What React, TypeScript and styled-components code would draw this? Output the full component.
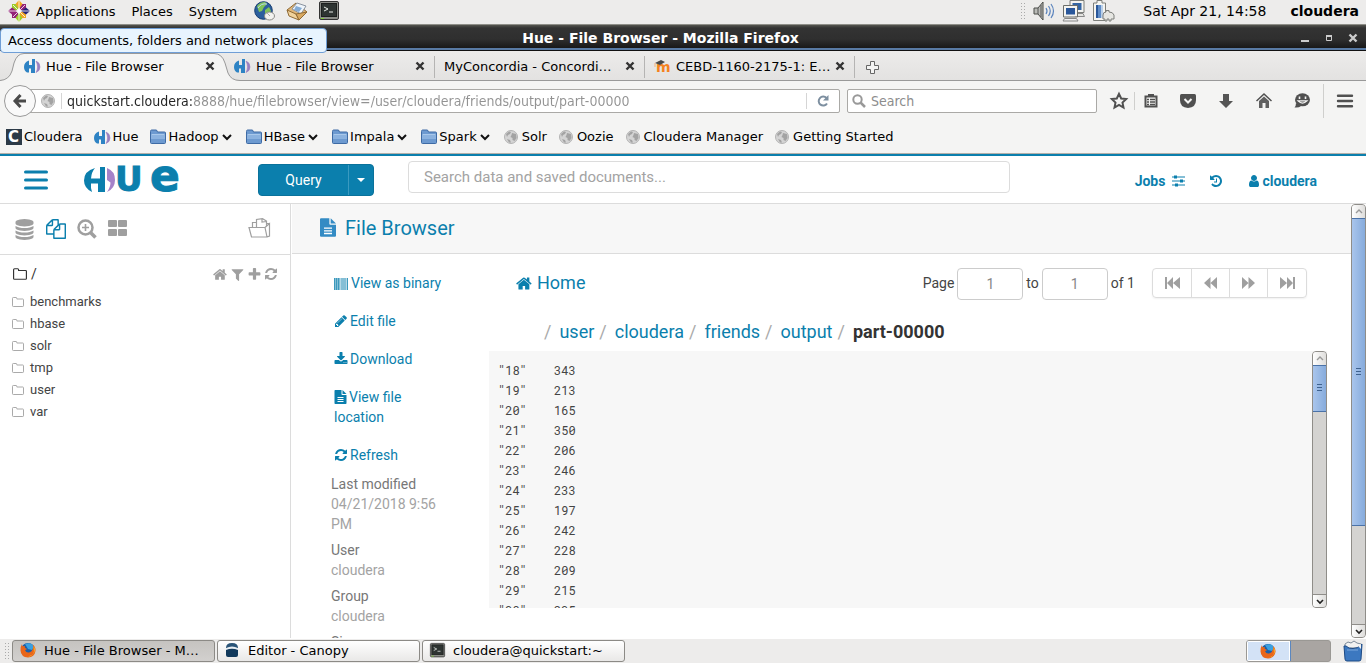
import React from 'react';
import styled, { createGlobalStyle } from 'styled-components';

const UI = '"DejaVu Sans", sans-serif';
const UI_NARROW = '"DejaVu Sans Condensed", "DejaVu Sans", sans-serif';
const WEB = 'Roboto, "Liberation Sans", sans-serif';
const MONO = '"Roboto Mono", "DejaVu Sans Mono", monospace';
const BLUE = '#0b7fad';
const GREY = '#9f9f9f';
const LINE = '#dcdcdc';

const GlobalStyle = createGlobalStyle`
  * { box-sizing: border-box; }
  body { margin: 0; background: #fff; }
  button, input { font: inherit; color: inherit; margin: 0; }
  button { padding: 0; border: 0; background: none; cursor: pointer; }
  ul, ol, dl, dd, h1, pre { margin: 0; padding: 0; list-style: none; font-weight: 400; }
  a { color: inherit; text-decoration: none; }
  svg { display: block; flex: none; overflow: visible; }
`;

/* ---------- desktop frame ---------- */

const Desktop = styled.div`
  display: flex;
  flex-direction: column;
  height: 100vh;
  overflow: hidden;
  position: relative;
  font-family: ${UI};
  font-size: 13px;
  color: #000;
`;

const Panel = styled.header`
  display: flex;
  align-items: center;
  flex: none;
  height: 25px;
  padding: 0 7px 2px 8px;
  background: #edeceb;
  border-bottom: 1px solid #8e8e88;
`;

const PanelMenu = styled.nav`
  display: flex;
  align-items: center;
  gap: 16px;
  margin-left: 6px;
`;

const Launchers = styled.div`
  display: flex;
  gap: 11px;
  margin-left: 17px;
  flex: 1;
`;

const Tray = styled.div`
  display: flex;
  align-items: center;
  gap: 8px;
`;

const Clock = styled.button`
  font-size: 14px;
  margin-left: 28px;
`;

const UserMenu = styled.button`
  font-size: 14px;
  font-weight: 700;
  margin-left: 24px;
`;

const Grip = styled.span`
  width: 5px;
  height: 18px;
  background-image: radial-gradient(#aaa 35%, transparent 40%);
  background-size: 3px 3px;
`;

const Tooltip = styled.div`
  position: absolute;
  z-index: 5;
  left: 0;
  top: 28px;
  height: 25px;
  padding: 0 13px 0 7px;
  line-height: 23px;
  background: #e8f4fe;
  border: 1px solid #6f9ed6;
  border-radius: 4px;
  white-space: nowrap;
`;

const TitleBar = styled.div`
  display: flex;
  align-items: center;
  flex: none;
  height: 26px;
  padding: 0 6px 0 28px;
  color: #fff;
  background: linear-gradient(#55554f 0, #333 3px, #2f2f2f 14px, #191919 23px, #587aa4 23px, #587aa4 25px, #111 25px);
`;

const WindowTitle = styled.span`
  flex: 1;
  text-align: center;
  font-size: 14px;
  font-weight: 700;
`;

const WindowButton = styled.button`
  width: 24px;
  height: 20px;
  display: grid;
  place-items: center;
  &:last-child { width: 14px; margin-left: 5px; }
`;

/* ---------- browser chrome ---------- */

const TabStrip = styled.div`
  display: flex;
  flex: none;
  height: 30px;
  padding-left: 14px;
  background: linear-gradient(#ecebea, #e3e2e1);
  border-bottom: 1px solid #999;
`;

const TabBox = styled.div<{ $active?: boolean; $divided?: boolean }>`
  position: relative;
  display: flex;
  align-items: center;
  width: 210px;
  padding: 0 6px 0 10px;
  height: 30px;
  z-index: ${p => (p.$active ? 1 : 0)};
  &::before {
    content: '';
    position: absolute;
    left: 0;
    top: 5px;
    height: 22px;
    border-left: ${p => (p.$divided ? '1px solid #b5b4b3' : '0')};
  }
`;

const TabShape = styled.svg`
  position: absolute;
  left: -14px;
  top: 0;
  z-index: -1;
`;

const TabButton = styled.button`
  display: flex;
  align-items: center;
  gap: 6px;
  flex: 1;
  min-width: 0;
  white-space: nowrap;
`;

const CloseButton = styled.button`
  width: 16px;
  height: 16px;
  display: grid;
  place-items: center;
`;

const NewTab = styled.button`
  display: grid;
  place-items: center;
  width: 36px;
  border-left: 1px solid #b5b4b3;
  margin: 5px 0 2px;
`;

const NavBar = styled.div`
  display: flex;
  align-items: center;
  flex: none;
  height: 39px;
  padding: 0 2px 0 4px;
  background: #f4f4f3;
  font-family: ${UI_NARROW};
  font-size: 14px;
`;

const BackButton = styled.button`
  display: grid;
  place-items: center;
  width: 32px;
  height: 32px;
  border: 1px solid #999;
  border-radius: 50%;
  background: #f9f9f9;
  position: relative;
  z-index: 1;
`;

const Field = styled.div<{ $width?: number; $tuck?: boolean }>`
  display: flex;
  align-items: center;
  height: 24px;
  background: #fff;
  border: 1px solid #aaa9a6;
  border-radius: 2px;
  flex: ${p => (p.$width ? `0 0 ${p.$width}px` : '1')};
  margin-left: ${p => (p.$tuck ? '-8px' : '7px')};
  padding-left: ${p => (p.$tuck ? '12px' : '4px')};
`;

const FieldInput = styled.input`
  flex: 1;
  min-width: 0;
  border: 0;
  outline: 0;
  padding: 0 5px;
  background: none;
  &::placeholder { color: #8d8d8d; opacity: 1; }
`;

const AddressInput = styled(FieldInput)`
  color: transparent;
  background: linear-gradient(to right, #222 131px, #929292 131px);
  background-clip: text;
  -webkit-background-clip: text;
`;

const FieldRule = styled.span`
  width: 1px;
  height: 16px;
  background: #d5d5d5;
  margin-left: 6px;
`;

const ReloadButton = styled.button`
  width: 32px;
  display: grid;
  place-items: center;
`;

const ToolButton = styled.button<{ $width?: number }>`
  width: ${p => p.$width ?? 38}px;
  height: 32px;
  display: grid;
  place-items: center;
`;

const ToolGroup = styled.div<{ $start: number }>`
  display: flex;
  padding-left: ${p => p.$start}px;
`;

const ToolRule = styled.span<{ $tall?: boolean }>`
  width: 1px;
  height: ${p => (p.$tall ? 34 : 18)}px;
  background: #cfcfcd;
  margin: ${p => (p.$tall ? '0 2px' : '0')};
`;

const Bookmarks = styled.nav`
  display: flex;
  align-items: center;
  flex: none;
  gap: 12px;
  height: 34px;
  padding-left: 6px;
  background: #f4f4f3;
  border-bottom: 1px solid #b3afa9;
`;

const Bookmark = styled.a`
  display: flex;
  align-items: center;
  gap: 2px;
`;

const BookmarkIcon = styled.span`
  width: 16px;
`;

/* ---------- hue ---------- */

const HueHeader = styled.header`
  display: flex;
  align-items: center;
  flex: none;
  height: 50px;
  padding: 0 49px 0 24px;
  border-top: 2px solid ${BLUE};
  border-bottom: 1px solid ${LINE};
  background: #fff;
  font-family: ${WEB};
  font-size: 14px;
`;

const MenuButton = styled.button`
  width: 24px;
  margin-right: 36px;
`;

const LogoLink = styled.a`
  width: 98px;
`;

const QuerySplit = styled.div`
  display: flex;
  margin-left: 76px;
  width: 116px;
  height: 32px;
  color: #fff;
  background: ${BLUE};
  border: 1px solid #0a729b;
  border-radius: 4px;
`;

const QueryButton = styled.button`
  flex: 1;
`;

const QueryCaret = styled.button`
  width: 25px;
  border-left: 1px solid #3a9ac0;
  display: grid;
  place-items: center;
`;

const HueSearch = styled.input`
  flex: 1;
  min-width: 0;
  height: 32px;
  margin: 0 125px 6px 34px;
  padding: 0 15px;
  font-size: 15px;
  border: 1px solid ${LINE};
  border-radius: 4px;
  outline: 0;
  &::placeholder { color: #a3a3a3; opacity: 1; }
`;

const AccountLinks = styled.nav`
  display: flex;
  align-items: center;
  gap: 24px;
  padding-top: 3px;
  color: ${BLUE};
  font-weight: 700;
`;

const AccountLink = styled.a<{ $gap?: number }>`
  display: flex;
  align-items: center;
  gap: ${p => p.$gap ?? 0}px;
`;

const Workspace = styled.div`
  display: flex;
  flex: 1;
  min-height: 0;
  overflow: hidden;
  padding-bottom: 1px;
  background: #fff;
  font-family: ${WEB};
  font-size: 14px;
  line-height: 20px;
  color: #444;
`;

const Sidebar = styled.aside`
  flex: 0 0 291px;
  border-right: 1px solid ${LINE};
  margin-right: 1px;
  font-size: 13px;
`;

const SourceTabs = styled.div`
  display: flex;
  align-items: center;
  gap: 11px;
  height: 51px;
  padding: 0 20px 0 14px;
  border-bottom: 1px solid ${LINE};
  color: ${GREY};
`;

const SourceButton = styled.button<{ $active?: boolean }>`
  color: ${p => (p.$active ? BLUE : GREY)};
  &:last-child { margin-left: auto; }
`;

const PathRow = styled.div`
  display: flex;
  align-items: center;
  height: 36px;
  padding: 2px 12px 0 13px;
  color: #333;
`;

const PathName = styled.a`
  display: flex;
  align-items: center;
  gap: 4px;
  flex: 1;
  font-size: 14px;
`;

const PathTools = styled.div`
  display: flex;
  gap: 2px;
  color: ${GREY};
`;

const TreeRow = styled.li`
  height: 22px;
  padding-left: 12px;
`;

const TreeLink = styled.a`
  display: flex;
  align-items: center;
  gap: 6px;
  line-height: 22px;
  svg { color: #aaa; }
`;

const Main = styled.main`
  flex: 1;
  min-width: 0;
  display: flex;
  flex-direction: column;
`;

const PageHeader = styled.div`
  display: flex;
  align-items: center;
  flex: none;
  gap: 9px;
  height: 50px;
  padding: 0 0 2px 28px;
  background: #f7f7f7;
  border-bottom: 1px solid ${LINE};
  color: ${BLUE};
  svg { color: #338bc4; }
`;

const PageTitle = styled.h1`
  font-size: 20px;
  line-height: 24px;
`;

const Columns = styled.div`
  display: flex;
  flex: 1;
  min-height: 0;
`;

const ActionColumn = styled.div`
  flex: 0 0 197px;
  padding: 19px 44px 0 39px;
  overflow: hidden;
`;

const ActionList = styled.ul`
  display: flex;
  flex-direction: column;
  gap: 18px;
  padding-left: 3px;
`;

const ActionLink = styled.a`
  color: ${BLUE};
  svg {
    display: inline-block;
    vertical-align: -2px;
    margin-right: 2px;
  }
`;

const Details = styled.dl`
  display: flex;
  flex-direction: column;
  gap: 6px;
  padding-top: 9px;
`;

const Term = styled.dt`
  color: #777;
`;

const Value = styled.dd`
  color: #a3a3a3;
`;

const FileColumn = styled.section`
  flex: 1;
  min-width: 0;
  display: flex;
  flex-direction: column;
  padding: 14px 24px 30px 0;
`;

const FileToolbar = styled.div`
  display: flex;
  align-items: flex-start;
  flex: none;
  padding: 0 20px 0 27px;
`;

const HomeLink = styled.a`
  display: flex;
  align-items: center;
  gap: 4px;
  flex: 1;
  height: 30px;
  color: ${BLUE};
  font-size: 18px;
`;

const Pager = styled.form`
  display: flex;
  align-items: flex-start;
  gap: 3px;
  line-height: 31px;
`;

const PagerLabel = styled.label`
  display: flex;
  gap: 3px;
`;

const PageInput = styled.input`
  width: 66px;
  height: 32px;
  text-align: center;
  color: #888;
  border: 1px solid #ccc;
  border-radius: 4px;
  outline: 0;
  background: #fff;
`;

const PagerGroup = styled.div`
  display: flex;
  height: 30px;
  margin-left: 14px;
  border: 1px solid ${LINE};
  border-radius: 4px;
  box-shadow: 0 1px 2px rgba(0, 0, 0, 0.06);
  color: ${GREY};
`;

const PagerButton = styled.button`
  width: 38px;
  display: grid;
  place-items: center;
  & + & { border-left: 1px solid ${LINE}; }
  &:last-child { width: 39px; }
`;

const Crumbs = styled.ol`
  display: flex;
  align-items: center;
  flex: none;
  height: 51px;
  padding: 12px 0 0 55px;
  font-size: 18px;
`;

const Crumb = styled.li<{ $last?: boolean }>`
  color: ${p => (p.$last ? '#333' : BLUE)};
  font-weight: ${p => (p.$last ? 700 : 400)};
  margin-right: 5px;
  &::before {
    content: '/';
    color: #aaa;
    font-weight: 400;
    margin-right: 8px;
  }
`;

const Viewer = styled.div`
  display: flex;
  flex: 1;
  min-height: 0;
  background: #f7f7f7;
`;

const FileText = styled.pre`
  flex: 1;
  overflow: hidden;
  padding: 9px;
  font-family: ${MONO};
  font-size: 12px;
  line-height: 20px;
  tab-size: 56px;
  color: #444;
`;

/* ---------- scrollbar ---------- */

const Bar = styled.div`
  display: flex;
  flex-direction: column;
  flex: 0 0 15px;
  background: #d4d3d1;
  border: 1px solid #8f8d89;
  border-radius: 4px;
  overflow: hidden;
`;

const BarButton = styled.button`
  height: 13px;
  flex: none;
  display: grid;
  place-items: center;
  background: linear-gradient(to right, #fff, #dedddb);
  &:last-child { border-top: 1px solid #8f8d89; }
`;

const Thumb = styled.div<{ $size: number }>`
  flex: ${p => p.$size};
  display: grid;
  place-items: center;
  margin: 0 -1px;
  border: 1px solid #4a72a8;
  background: linear-gradient(to right, #a9c5ec, #86abdc);
`;

const Rest = styled.div<{ $size: number }>`
  flex: ${p => p.$size};
`;

/* ---------- taskbar ---------- */

const TaskBar = styled.footer`
  display: flex;
  align-items: center;
  flex: none;
  gap: 2px;
  height: 24px;
  padding: 0 3px 0 4px;
  background: #edeceb;
`;

const TaskList = styled.div`
  display: flex;
  gap: 2px;
  margin-left: 1px;
`;

const TaskButton = styled.button<{ $active?: boolean }>`
  display: flex;
  align-items: center;
  gap: 8px;
  width: 203px;
  height: 22px;
  padding: 0 7px 2px;
  white-space: nowrap;
  border: 1px solid #8c8a86;
  border-radius: 3px;
  background: ${p => (p.$active ? 'linear-gradient(#c5c3c0, #d2d0ce)' : 'linear-gradient(#fff, #e9e8e7)')};
`;

const Switcher = styled.div`
  display: flex;
  width: 85px;
  height: 22px;
  margin-left: auto;
  margin-right: 10px;
  background: #a9a5a2;
  border: 1px solid #9a9894;
  border-radius: 3px;
  overflow: hidden;
`;

const Desk = styled.button<{ $active?: boolean }>`
  flex: 1;
  display: grid;
  place-items: center;
  background: ${p => (p.$active ? '#d3e2f6' : 'transparent')};
  border: ${p => (p.$active ? '1px solid #fff' : '0')};
  box-shadow: ${p => (p.$active ? '0 0 0 1px #5b87bf' : 'none')};
`;

/* ---------- icons ---------- */

const FA = {
  home: 'M1408 992v480q0 26-19 45t-45 19h-384v-384h-256v384h-384q-26 0-45-19t-19-45v-480q0-1 .5-3t.5-3l575-474 575 474q1 2 1 6zm223-69l-62 74q-8 9-21 11h-3q-13 0-21-7l-692-577-692 577q-12 8-24 7-13-2-21-11l-62-74q-8-10-7-23.5t11-21.5l719-599q32-26 76-26t76 26l244 204v-195q0-14 9-23t23-9h192q14 0 23 9t9 23v408l219 182q10 8 11 21.5t-7 23.5z',
  user: 'M1536 1399q0 109-62.5 187t-150.5 78h-854q-88 0-150.5-78t-62.5-187q0-85 8.5-160.5t31.5-152 58.5-131 94-89 134.5-34.5q131 128 313 128t313-128q76 0 134.5 34.5t94 89 58.5 131 31.5 152 8.5 160.5zm-256-887q0 159-112.5 271.5t-271.5 112.5-271.5-112.5-112.5-271.5 112.5-271.5 271.5-112.5 271.5 112.5 112.5 271.5z',
  refresh: 'M1639 1056q0 5-1 7-64 268-268 434.5t-478 166.5q-146 0-282.5-55t-243.5-157l-129 129q-19 19-45 19t-45-19-19-45v-448q0-26 19-45t45-19h448q26 0 45 19t19 45-19 45l-137 137q71 66 161 102t187 36q134 0 250-65t186-179q11-17 53-117 8-23 30-23h192q13 0 22.5 9.5t9.5 22.5zm25-800v448q0 26-19 45t-45 19h-448q-26 0-45-19t-19-45 19-45l138-138q-148-137-349-137-134 0-250 65t-186 179q-11 17-53 117-8 23-30 23h-199q-13 0-22.5-9.5t-9.5-22.5v-7q65-268 270-434.5t480-166.5q146 0 284 55.5t245 156.5l130-129q19-19 45-19t45 19 19 45z',
  download: 'M1344 1344q0-26-19-45t-45-19-45 19-19 45 19 45 45 19 45-19 19-45zm256 0q0-26-19-45t-45-19-45 19-19 45 19 45 45 19 45-19 19-45zm128-224v320q0 40-28 68t-68 28h-1472q-40 0-68-28t-28-68v-320q0-40 28-68t68-28h465l135 136q58 56 136 56t136-56l136-136h464q40 0 68 28t28 68zm-325-569q17 41-14 70l-448 448q-18 19-45 19t-45-19l-448-448q-31-29-14-70 17-39 59-39h256v-448q0-26 19-45t45-19h256q26 0 45 19t19 45v448h256q42 0 59 39z',
  pencil: 'M491 1536l91-91-235-235-91 91v107h128v128h107zm523-928q0-22-22-22-10 0-17 7l-542 542q-7 7-7 17 0 22 22 22 10 0 17-7l542-542q7-7 7-17zm-54-192l416 416-832 832h-416v-416zm683 96q0 53-37 90l-166 166-416-416 166-165q36-38 90-38 53 0 91 38l235 234q37 39 37 91z',
  history: 'M1664 896q0 156-61 298t-164 245-245 164-298 61q-172 0-327-72.5t-264-204.5q-7-10-6.5-22.5t8.5-20.5l137-138q10-9 25-9 16 2 23 12 73 95 179 147t225 52q104 0 198.5-40.5t163.5-109.5 109.5-163.5 40.5-198.5-40.5-198.5-109.5-163.5-163.5-109.5-198.5-40.5q-98 0-188 35.5t-160 101.5l137 138q31 30 14 69-17 40-59 40h-448q-26 0-45-19t-19-45v-448q0-42 40-59 39-17 69 14l130 129q107-101 244.5-156.5t284.5-55.5q156 0 298 61t245 164 164 245 61 298zm-640-288v448q0 14-9 23t-23 9h-320q-14 0-23-9t-9-23v-64q0-14 9-23t23-9h224v-352q0-14 9-23t23-9h64q14 0 23 9t9 23z',
  filter: 'M1595 295q17 41-14 70l-493 493v742q0 42-39 59-13 5-25 5-27 0-45-19l-256-256q-19-19-19-45v-486l-493-493q-31-29-14-70 17-39 59-39h1280q42 0 59 39z',
  plus: 'M1600 736v192q0 40-28 68t-68 28h-416v416q0 40-28 68t-68 28h-192q-40 0-68-28t-28-68v-416h-416q-40 0-68-28t-28-68v-192q0-40 28-68t68-28h416v-416q0-40 28-68t68-28h192q40 0 68 28t28 68v416h416q40 0 68 28t28 68z',
  files: 'M1696 384q40 0 68 28t28 68v1216q0 40-28 68t-68 28h-960q-40 0-68-28t-28-68v-288h-544q-40 0-68-28t-28-68v-672q0-40 20-88t48-76l408-408q28-28 76-48t88-20h416q40 0 68 28t28 68v328q68-40 128-40h416zm-544 213l-299 299h299v-299zm-640-384l-299 299h299v-299zm196 647l316-316v-416h-384v416q0 40-28 68t-68 28h-416v640h512v-256q0-40 20-88t48-76zm956 804v-1152h-384v416q0 40-28 68t-68 28h-416v640h896z',
  database: 'M896 768q237 0 443-43t325-127v170q0 69-103 128t-280 93.5-385 34.5-385-34.5-280-93.5-103-128v-170q119 84 325 127t443 43zm0 768q237 0 443-43t325-127v170q0 69-103 128t-280 93.5-385 34.5-385-34.5-280-93.5-103-128v-170q119 84 325 127t443 43zm0-384q237 0 443-43t325-127v170q0 69-103 128t-280 93.5-385 34.5-385-34.5-280-93.5-103-128v-170q119 84 325 127t443 43zm0-1152q208 0 385 34.5t280 93.5 103 128v128q0 69-103 128t-280 93.5-385 34.5-385-34.5-280-93.5-103-128v-128q0-69 103-128t280-93.5 385-34.5z',
};

const Fa = ({ name, size = 14 }: { name: keyof typeof FA; size?: number }) => (
  <svg width={size} height={size} viewBox="0 0 1792 1792" fill="currentColor" aria-hidden="true">
    <path d={FA[name]} />
  </svg>
);

type IconProps = { w: number; h: number; children: React.ReactNode; box?: string };
const Icon = ({ w, h, children, box }: IconProps) => (
  <svg width={w} height={h} viewBox={box ?? `0 0 ${w} ${h}`} fill="none" aria-hidden="true">{children}</svg>
);

const FileIcon = ({ width = 13, height = 14 }: { width?: number; height?: number }) => (
  <Icon w={width} h={height} box="0 0 12 14">
    <path d="M0 .8Q0 0 .8 0H7v4.2Q7 5 7.8 5H12v8.2q0 .8-.8.8H.8Q0 14 0 13.200z" fill="currentColor" />
    <path d="M8 0l4 4H8z" fill="currentColor" />
    <path d="M3 7.500h6M3 9.500h6M3 11.500h6" stroke="#fff" />
  </Icon>
);

const FolderOutline = ({ size = 12 }: { size?: number }) => (
  <Icon w={size} h={size} box="0 0 12 12">
    <path d="M.5 2.300Q.5 1.500 1.300 1.500H4q.8 0 .8.800v.7h6q.7 0 .7.700v6.100q0 .7-.7.700H1.300q-.8 0-.8-.7z" stroke="currentColor" />
  </Icon>
);

const BarcodeIcon = () => (
  <Icon w={15} h={12}>
    <path d="M0 0h1v12H0zM2 0h1v12H2zM4 0h1v12H4zM13 0h1v12h-1z" fill={BLUE} opacity=".8" />
    <path d="M1 0h1v12H1zM3 0h1v12H3zM5 0h1v12H5zM7 0h5v12H7z" fill={BLUE} opacity=".5" />
    <path d="M12 0h1v12h-1zM6 0h1v12H6z" fill={BLUE} opacity=".3" />
  </Icon>
);

const HueMark = () => (
  <Icon w={16} h={14}>
    <path d="M5 1.500Q0 3 0 8q0 3.500 3 5.500h2V9.500h2V14h4V0H8v6H5z" fill="#2e83c4" />
    <path d="M12 2q4 1.500 4 6 0 4-4 5.500 1.500-2.500 1.500-5.500T12 2z" fill="#9a7fc0" stroke="#9a7fc0" strokeWidth=".6" />
  </Icon>
);

const HueLogo = () => (
  <svg width="98" height="26" viewBox="0 0 98 26" role="img" aria-label="Hue">
    <path d="M11 1Q0 4 0 13.500 0 21 8 25q-1.500-4-1-8.500h7V25h7V0h-5v11.500H7Q7.500 5 11 1z" fill={BLUE} />
    <path d="M23 1q8 3 8 12 0 8.500-8 12 3.500-5 3.500-9.500L23 13z" fill="#a582c9" />
    <g fill={BLUE} stroke={BLUE} fontFamily="DejaVu Sans" fontWeight="700">
      <text x="31" y="24" fontSize="34">U</text>
      <text x="66" y="24" fontSize="44">e</text>
    </g>
  </svg>
);

const GlobeGrey = () => (
  <Icon w={14} h={14}>
    <circle cx="7" cy="7" r="6.500" fill="#d4d4d4" stroke="#b4b4b4" />
    <path d="M2 4l3-2.500 2 .5-1 2-2 1-1 2zM8 3l4 1 .5 4-2 3-2-1 0-2-2-1 1-2zM3 9l3 1 1 2.500H5z" fill="#a3a3a3" />
  </Icon>
);

const FolderBlue = () => (
  <Icon w={16} h={15}>
    <path d="M.5 2.500q0-1.500 1-1.500h5l1 2h7q1 0 1 1v9.500q0 1-1 1h-13q-1 0-1-1z" fill="#6d9ad0" stroke="#3e6ba5" />
    <path d="M1.500 5.500h13" stroke="#a9c8ea" />
    <path d="M1 6h14v4H1z" fill="#8bb2df" />
  </Icon>
);

const Chevron = () => (
  <Icon w={13} h={8}><path d="M2 2l4 4 4-4" stroke="#111" strokeWidth="2" /></Icon>
);

const Cross = ({ color = '#333' }: { color?: string }) => (
  <Icon w={10} h={10}><path d="M1.500 1.500l7 7M8.500 1.500l-7 7" stroke={color} strokeWidth="2.400" /></Icon>
);

const TerminalIcon = ({ size = 20 }: { size?: number }) => (
  <Icon w={size} h={size} box="0 0 20 20">
    <rect x=".5" y=".5" width="19" height="18" rx="1.500" fill="#8b8d88" stroke="#333" />
    <rect x="2.500" y="2.500" width="15" height="13" fill="#2e3432" stroke="#1c1f1e" />
    <path d="M5 6l4 2-4 2M10 11h4" stroke="#e8ece8" />
    <path d="M2 17.500h3" stroke="#7fd12f" />
  </Icon>
);

const FirefoxIcon = () => (
  <Icon w={16} h={16}>
    <circle cx="8" cy="8" r="7" fill="#1c5fa8" />
    <path d="M5 2q5-2 8 1 1 3-1 5L8 7z" fill="#3aa0e0" />
    <path d="M2 2q0 1.500.6 2.200L5 4q-1 1.300.6 2.300L7 7q-1 1-2 1 1 3 4 2.500Q12 10 13 6q.5-2-.5-3.500Q16 5 15.500 9q-1 6-7.500 6.500Q1 15 .5 8.500.500 4 2 2z" fill="#e9661a" />
    <path d="M13.500 4Q16 7 14 11q-2 3-6 3.500 5 0 6-5z" fill="#fbb829" />
  </Icon>
);

const CanopyIcon = () => (
  <Icon w={15} h={14}>
    <path d="M1 4h12v8q0 2-2 2H3q-2 0-2-2z" fill="#123a5c" />
    <path d="M1 5q0-5 6-5t6 5q-6-2-12 0z" fill="#2a5478" />
    <path d="M1 5q6-3 12 0v2Q7 4.500 1 7z" fill="#e8eef3" />
  </Icon>
);

const CentosIcon = () => (
  <Icon w={22} h={22}>
    <path d="M4 4h6v6H4z" fill="#9ccd2a" /><path d="M12 4h6v6h-6z" fill="#932279" />
    <path d="M4 12h6v6H4z" fill="#932279" /><path d="M12 12h6v6h-6z" fill="#efa724" />
    <path d="M11 0l3.500 4L11 9 7.500 4z" fill="#efa724" /><path d="M0 11l4-3.500L9 11l-5 3.500z" fill="#932279" />
    <path d="M22 11l-4-3.500-5 3.500 5 3.500z" fill="#262577" /><path d="M11 22l-3.500-4 3.500-5 3.500 5z" fill="#9ccd2a" />
    <path d="M5 5l12 12M17 5L5 17M11 0v22M0 11h22" stroke="#fff" strokeWidth=".8" />
  </Icon>
);

const GlobeMouse = () => (
  <Icon w={21} h={20}>
    <circle cx="9.500" cy="9.500" r="8.800" fill="#2c5f9e" stroke="#173d70" />
    <path d="M3 5q3-4 8-4l2 2-3 3-2 4-3 1zM11 9l4-3 2 4-3 4-3-1z" fill="#7fc35a" />
    <path d="M4 7q3-5 9-4" stroke="#b8d7f2" />
    <ellipse cx="15.500" cy="15" rx="5" ry="4" fill="#f2f2ef" stroke="#8b8b86" />
    <path d="M13 12l3 3" stroke="#aaa" />
  </Icon>
);

const MailIcon = () => (
  <Icon w={22} h={20}>
    <path d="M1 9l9-7 11 9-8 8z" fill="#e0b679" stroke="#8f6a35" />
    <path d="M6 8l5-6 9 3-5 8z" fill="#eef4fa" stroke="#8a93a0" />
    <path d="M10 5l6 2-3 4-5-2z" fill="#84acd6" />
    <path d="M1 9l9 4 3 6-10-4z" fill="#f0d29c" stroke="#8f6a35" />
    <path d="M10 13l11-2-8 8z" fill="#d9a962" stroke="#8f6a35" />
  </Icon>
);

const VolumeIcon = () => (
  <Icon w={22} h={20}>
    <path d="M1 7h4l5-6v18l-5-6H1z" fill="#b9bab6" stroke="#4b4d49" />
    <path d="M5 7v6M8 4v12" stroke="#555" />
    <path d="M13 7q2 3 0 6M15.500 5q3.500 5 0 10M18 3q5 7 0 14" stroke="#5a83bd" strokeWidth="1.200" />
  </Icon>
);

const NetworkIcon = () => (
  <Icon w={22} h={22}>
    <path d="M8.500 2h11v9h-11z" fill="#3465a4" stroke="#f4f4f1" strokeWidth="2" />
    <path d="M7 .5h14v12H7z" stroke="#7c7e7a" />
    <path d="M12 13.500h8l1.500 3H12z" fill="#e4e4e0" stroke="#888" />
    <path d="M2 7h11v8.500H2z" fill="#2a579a" stroke="#f4f4f1" strokeWidth="2" />
    <path d="M.5 5.500h14v11.500H.5z" stroke="#6c6e6a" />
    <path d="M1.500 18.500h12l1.500 2.500H0z" fill="#eee" stroke="#888" />
  </Icon>
);

const BatteryIcon = () => (
  <Icon w={22} h={22}>
    <path d="M4 .5h5v2.500h3.500v17.500H.5V3H4z" fill="#f4f4f1" stroke="#7c7e7a" />
    <path d="M3 5h2v13H3z" fill="#2a579a" /><path d="M5 5h3v13H5z" fill="#5f8cc6" /><path d="M8 5h2v13H8z" fill="#b9cfe9" />
    <path d="M10 15q0-3 3-3v-1.500h3V12q4 0 5 3v4h-3v2h-2v-2h-2v2h-2v-2h-2z" fill="#e6e6e2" stroke="#7c7e7a" />
  </Icon>
);

const MoodleIcon = () => (
  <Icon w={16} h={14}>
    <text x="2" y="13" fontFamily="DejaVu Sans" fontWeight="700" fontSize="14" fill="#f58220">m</text>
    <path d="M1 4l6-3 4 2-5 3z" fill="#4a4a4a" /><path d="M1 4v4" stroke="#f7b27a" />
  </Icon>
);

const ClouderaIcon = () => (
  <Icon w={16} h={16}>
    <rect width="16" height="16" fill="#2c3a47" />
    <text x="2" y="13" fontFamily="DejaVu Sans" fontWeight="700" fontSize="15" fill="#fff">C</text>
  </Icon>
);

const TrashIcon = () => (
  <Icon w={20} h={21}>
    <path d="M2 3l3-2 3 1 3-2 3 2 4 1v4H2z" fill="#f1f1f1" stroke="#7c8a99" />
    <path d="M1 5h2q3 3 7 2.500Q14 8 19 3l-1 15q0 2-2 2H4q-2 0-2-2z" fill="#3c78c0" stroke="#1d4a85" />
    <path d="M4 9h11" stroke="#7ba8dd" />
    <path d="M14 4l4 4V3z" fill="#f1f1f1" />
  </Icon>
);

const ScrollBar = ({ thumb, rest }: { thumb: number; rest: number }) => (
  <Bar>
    <BarButton aria-label="Scroll up">
      <Icon w={8} h={5}><path d="M1 4l3-3 3 3" stroke="#999" strokeWidth="1.400" /></Icon>
    </BarButton>
    <Thumb $size={thumb}>
      <Icon w={5} h={8}><path d="M0 .5h5M0 3.500h5M0 6.500h5" stroke="#3f628f" /></Icon>
    </Thumb>
    <Rest $size={rest} />
    <BarButton aria-label="Scroll down">
      <Icon w={8} h={5}><path d="M1 1l3 3 3-3" stroke="#222" strokeWidth="1.600" /></Icon>
    </BarButton>
  </Bar>
);

/* ---------- data ---------- */

const tabs = [
  { title: 'Hue - File Browser', icon: <HueMark />, active: true },
  { title: 'Hue - File Browser', icon: <HueMark /> },
  { title: 'MyConcordia - Concordi…', divided: true },
  { title: 'CEBD-1160-2175-1: E…', icon: <MoodleIcon />, divided: true },
];

const bookmarks = [
  { label: 'Cloudera', icon: <ClouderaIcon /> },
  { label: 'Hue', icon: <HueMark /> },
  { label: 'Hadoop', icon: <FolderBlue />, menu: true },
  { label: 'HBase', icon: <FolderBlue />, menu: true },
  { label: 'Impala', icon: <FolderBlue />, menu: true },
  { label: 'Spark', icon: <FolderBlue />, menu: true },
  { label: 'Solr', icon: <GlobeGrey /> },
  { label: 'Oozie', icon: <GlobeGrey /> },
  { label: 'Cloudera Manager', icon: <GlobeGrey /> },
  { label: 'Getting Started', icon: <GlobeGrey /> },
];

const folders = ['benchmarks', 'hbase', 'solr', 'tmp', 'user', 'var'];

const actions = [
  { label: 'View as binary', icon: <BarcodeIcon /> },
  { label: 'Edit file', icon: <Fa name="pencil" /> },
  { label: 'Download', icon: <Fa name="download" /> },
  { label: 'View file location', icon: <FileIcon /> },
  { label: 'Refresh', icon: <Fa name="refresh" /> },
];

const details: { term: string; value?: string }[] = [
  { term: 'Last modified', value: '04/21/2018 9:56 PM' },
  { term: 'User', value: 'cloudera' },
  { term: 'Group', value: 'cloudera' },
  { term: 'Size' },
];

const crumbs = ['user', 'cloudera', 'friends', 'output', 'part-00000'];

const rows: [number, number][] = [
  [18, 343], [19, 213], [20, 165], [21, 350], [22, 206], [23, 246], [24, 233],
  [25, 197], [26, 242], [27, 228], [28, 209], [29, 215], [30, 235],
];

export default function App() {
  return (
    <Desktop>
      <GlobalStyle />
      <Panel>
        <CentosIcon />
        <PanelMenu>
          <button>Applications</button>
          <button>Places</button>
          <button>System</button>
        </PanelMenu>
        <Launchers>
          <button aria-label="Web browser"><GlobeMouse /></button>
          <button aria-label="Mail"><MailIcon /></button>
          <button aria-label="Terminal"><TerminalIcon /></button>
        </Launchers>
        <Tray>
          <Grip />
          <VolumeIcon />
          <NetworkIcon />
          <BatteryIcon />
        </Tray>
        <Clock>Sat Apr 21, 14:58</Clock>
        <UserMenu>cloudera</UserMenu>
      </Panel>
      <Tooltip role="tooltip">Access documents, folders and network places</Tooltip>

      <TitleBar>
        <WindowTitle>Hue - File Browser - Mozilla Firefox</WindowTitle>
        <WindowButton aria-label="Minimize"><Icon w={8} h={8}><path d="M0 7h8" stroke="#ccc" strokeWidth="2" /></Icon></WindowButton>
        <WindowButton aria-label="Maximize"><Icon w={6} h={6}><path d="M.5 1h5v4.500h-5z" stroke="#ccc" /><path d="M0 1h6" stroke="#ccc" strokeWidth="2" /></Icon></WindowButton>
        <WindowButton aria-label="Close"><Cross color="#ccc" /></WindowButton>
      </TitleBar>

      <TabStrip>
        {tabs.map((tab, i) => (
          <TabBox key={i} $active={tab.active} $divided={tab.divided}>
            {tab.active && (
              <TabShape width="240" height="30" viewBox="0 0 240 30" fill="none" aria-hidden="true">
                <path d="M0 29.500Q9 29 12 20l2-8Q17 2.500 24 2.500H214Q222 2.500 225 12l3 10Q231 29.500 240 29.500V30H0z" fill="#f4f4f3" />
                <path d="M0 29.500Q9 29 12 20l2-8Q17 2.500 24 2.500H214Q222 2.500 225 12l3 10Q231 29.500 240 29.500" stroke="#999" />
              </TabShape>
            )}
            <TabButton>{tab.icon}{tab.title}</TabButton>
            <CloseButton aria-label="Close tab"><Cross /></CloseButton>
          </TabBox>
        ))}
        <NewTab aria-label="New tab">
          <Icon w={13} h={13}><path d="M4.500.5h4v4h4v4h-4v4h-4v-4h-4v-4h4z" fill="#f4f4f3" stroke="#666" /></Icon>
        </NewTab>
      </TabStrip>

      <NavBar>
        <BackButton aria-label="Back">
          <Icon w={16} h={16}><path d="M8.500 2L3 8l5.500 6M3 8h11" stroke="#4a4a4a" strokeWidth="3" /></Icon>
        </BackButton>
        <Field $tuck>
          <GlobeGrey />
          <FieldRule />
          <AddressInput aria-label="Address" defaultValue="quickstart.cloudera:8888/hue/filebrowser/view=/user/cloudera/friends/output/part-00000" />
          <FieldRule />
          <ReloadButton aria-label="Reload">
            <Icon w={12} h={12}><path d="M10 8.500A4.500 4.500 0 1 1 9.500 3" stroke="#7d8fa0" strokeWidth="2" /><path d="M11.500 0v5.500H6z" fill="#7d8fa0" /></Icon>
          </ReloadButton>
        </Field>
        <Field $width={250}>
          <Icon w={14} h={14}><circle cx="5.500" cy="5.500" r="4.200" stroke="#999" strokeWidth="2" /><path d="M8.500 8.500l4.500 4.500" stroke="#999" strokeWidth="2.500" /></Icon>
          <FieldInput aria-label="Search" placeholder="Search" />
        </Field>
        <ToolGroup $start={7}>
          <ToolButton $width={30} aria-label="Bookmark">
            <Icon w={18} h={17}><path d="M9 1.800l2.200 4.700 5 .6-3.700 3.500 1 5L9 13l-4.500 2.600 1-5L1.800 7.100l5-.6z" stroke="#505050" strokeWidth="2" /></Icon>
          </ToolButton>
        </ToolGroup>
        <ToolRule />
        <ToolButton $width={32} aria-label="Reading list">
          <Icon w={14} h={15}><path d="M1.500 3.500h11v10h-11z" stroke="#505050" strokeWidth="2" /><path d="M4 1h6v3H4z" fill="#505050" /><path d="M3 6.500h2M6 6.500h5M3 9h2M6 9h5M3 11.500h2M6 11.500h5" stroke="#505050" strokeWidth="1.300" /></Icon>
        </ToolButton>
        <ToolGroup $start={2}>
          <ToolButton aria-label="Pocket">
            <Icon w={16} h={14}><path d="M1.500 0h13Q16 0 16 1.500V6q0 7.500-8 8-8-.5-8-8V1.500Q0 0 1.500 0z" fill="#505050" /><path d="M4.500 5L8 8.500 11.500 5" stroke="#f4f4f3" strokeWidth="2" /></Icon>
          </ToolButton>
          <ToolButton aria-label="Downloads">
            <Icon w={14} h={14}><path d="M4 0h6v7h4l-7 7-7-7h4z" fill="#555" /></Icon>
          </ToolButton>
          <ToolButton aria-label="Home">
            <Icon w={16} h={15}><path d="M0 7.500L8 0l8 7.500-1 1L8 2 1 8.500z" fill="#505050" /><path d="M3 8l5-4.500L13 8v7H9.500v-5h-3v5H3z" fill="#606060" /></Icon>
          </ToolButton>
          <ToolButton aria-label="Hello">
            <Icon w={16} h={15}><ellipse cx="8.500" cy="6.800" rx="7.500" ry="6.500" fill="#505050" /><path d="M2 10q0 3-1.500 4.500Q5 15 7 13z" fill="#505050" /><path d="M5.500 3.500v2.500M11.500 3.500v2.500" stroke="#f4f4f3" strokeWidth="1.600" /><path d="M4 7.800q4.500 4.500 9 0z" stroke="#f4f4f3" strokeWidth="1.200" /></Icon>
          </ToolButton>
        </ToolGroup>
        <ToolRule $tall />
        <ToolButton aria-label="Menu">
          <Icon w={16} h={14}><path d="M1 1.800h14M1 7h14M1 12.200h14" stroke="#505050" strokeWidth="2.400" strokeLinecap="round" /></Icon>
        </ToolButton>
      </NavBar>

      <Bookmarks>
        {bookmarks.map(b => (
          <Bookmark key={b.label} href="#">
            <BookmarkIcon>{b.icon}</BookmarkIcon>
            {b.label}
            {b.menu && <Chevron />}
          </Bookmark>
        ))}
      </Bookmarks>

      <HueHeader>
        <MenuButton aria-label="Menu">
          <Icon w={24} h={20}><path d="M1.500 2h21M1.500 10h21M1.500 18h21" stroke={BLUE} strokeWidth="3" strokeLinecap="round" /></Icon>
        </MenuButton>
        <LogoLink href="#"><HueLogo /></LogoLink>
        <QuerySplit>
          <QueryButton>Query</QueryButton>
          <QueryCaret aria-label="Query types"><Icon w={8} h={4}><path d="M0 0h8L4 4z" fill="#fff" /></Icon></QueryCaret>
        </QuerySplit>
        <HueSearch aria-label="Search data" placeholder="Search data and saved documents..." />
        <AccountLinks>
          <AccountLink href="#" $gap={7}>
            Jobs
            <Icon w={13} h={12}><path d="M0 2h13M0 6h13M0 10h13" stroke={BLUE} /><path d="M2 .5h3v3H2zM8 4.500h3v3H8zM3 8.500h3v3H3z" fill={BLUE} /></Icon>
          </AccountLink>
          <AccountLink href="#" aria-label="History"><Fa name="history" /></AccountLink>
          <AccountLink href="#" $gap={1}><Fa name="user" />cloudera</AccountLink>
        </AccountLinks>
      </HueHeader>

      <Workspace>
        <Sidebar>
          <SourceTabs>
            <SourceButton aria-label="Databases"><Fa name="database" size={21} /></SourceButton>
            <SourceButton $active aria-label="Files"><Fa name="files" size={20} /></SourceButton>
            <SourceButton aria-label="Indexes">
              <Icon w={20} h={20}><circle cx="8.500" cy="8.500" r="7" stroke="currentColor" strokeWidth="2.500" /><path d="M8.500 5v7M5 8.500h7" stroke="currentColor" strokeWidth="1.600" /><path d="M13.500 13.500l5 5" stroke="currentColor" strokeWidth="3.500" /></Icon>
            </SourceButton>
            <SourceButton aria-label="Apps">
              <Icon w={20} h={20}><rect y="1" width="9" height="7" rx="1" fill="currentColor" /><rect x="10" y="1" width="9" height="7" rx="1" fill="currentColor" /><rect y="10" width="9" height="7" rx="1" fill="currentColor" /><rect x="10" y="10" width="9" height="7" rx="1" fill="currentColor" /></Icon>
            </SourceButton>
            <SourceButton aria-label="Documents">
              <Icon w={22} h={22}><path d="M1 9.500h16l2 9.500H3.500zM19 19l2.500-1V5.500L17 9.500M4.500 9V4.500h4M8.500 9V1.500l6-.8L18.500 3v5M14 1v3l4.500-.5M18.500 5.500h3" stroke="currentColor" strokeWidth="1.200" /></Icon>
            </SourceButton>
          </SourceTabs>
          <PathRow>
            <PathName href="#"><FolderOutline size={14} />/</PathName>
            <PathTools>
              <button aria-label="Home"><Fa name="home" size={15} /></button>
              <button aria-label="Filter"><Fa name="filter" size={15} /></button>
              <button aria-label="Create"><Fa name="plus" size={15} /></button>
              <button aria-label="Refresh"><Fa name="refresh" /></button>
            </PathTools>
          </PathRow>
          <ul>
            {folders.map(name => (
              <TreeRow key={name}><TreeLink href="#"><FolderOutline />{name}</TreeLink></TreeRow>
            ))}
          </ul>
        </Sidebar>

        <Main>
          <PageHeader>
            <FileIcon width={16} height={19} />
            <PageTitle>File Browser</PageTitle>
          </PageHeader>
          <Columns>
            <ActionColumn>
              <ActionList>
                {actions.map(a => (
                  <li key={a.label}><ActionLink href="#">{a.icon}{a.label}</ActionLink></li>
                ))}
              </ActionList>
              <Details>
                {details.map(({ term, value }) => (
                  <div key={term}><Term>{term}</Term>{value && <Value>{value}</Value>}</div>
                ))}
              </Details>
            </ActionColumn>
            <FileColumn>
              <FileToolbar>
                <HomeLink href="#"><Fa name="home" size={17} />Home</HomeLink>
                <Pager>
                  <PagerLabel>Page <PageInput defaultValue="1" /></PagerLabel>
                  <PagerLabel>to <PageInput defaultValue="1" /></PagerLabel>
                  <span>of 1</span>
                  <PagerGroup>
                    <PagerButton type="button" aria-label="First page"><Icon w={15} h={12}><path d="M0 0h2v12H0zM8 0v12L2 6zM15 0v12L8 6z" fill="currentColor" /></Icon></PagerButton>
                    <PagerButton type="button" aria-label="Previous page"><Icon w={13} h={12}><path d="M6.500 0v12L0 6zM13 0v12L6.500 6z" fill="currentColor" /></Icon></PagerButton>
                    <PagerButton type="button" aria-label="Next page"><Icon w={13} h={12}><path d="M0 0v12l6.500-6zM6.500 0v12L13 6z" fill="currentColor" /></Icon></PagerButton>
                    <PagerButton type="button" aria-label="Last page"><Icon w={15} h={12}><path d="M13 0h2v12h-2zM0 0v12l7-6zM7 0v12l6-6z" fill="currentColor" /></Icon></PagerButton>
                  </PagerGroup>
                </Pager>
              </FileToolbar>
              <Crumbs>
                {crumbs.map((name, i) => {
                  const last = i === crumbs.length - 1;
                  return <Crumb key={name} $last={last}>{last ? name : <a href="#">{name}</a>}</Crumb>;
                })}
              </Crumbs>
              <Viewer>
                <FileText>{rows.map(([age, count]) => `"${age}"\t${count}`).join('\n')}</FileText>
                <ScrollBar thumb={46} rest={188} />
              </Viewer>
            </FileColumn>
          </Columns>
        </Main>
        <ScrollBar thumb={307} rest={98} />
      </Workspace>

      <TaskBar>
        <Grip />
        <TaskList>
          <TaskButton $active><FirefoxIcon />Hue - File Browser - M…</TaskButton>
          <TaskButton><CanopyIcon />Editor - Canopy</TaskButton>
          <TaskButton><TerminalIcon size={15} />cloudera@quickstart:~</TaskButton>
        </TaskList>
        <Switcher>
          <Desk $active aria-label="Workspace 1"><FirefoxIcon /></Desk>
          <Desk aria-label="Workspace 2" />
        </Switcher>
        <button aria-label="Trash"><TrashIcon /></button>
      </TaskBar>
    </Desktop>
  );
}
